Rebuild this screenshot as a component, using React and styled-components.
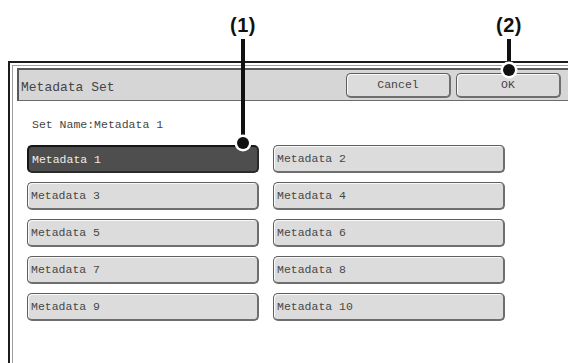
import React from "react";
import styled, { createGlobalStyle } from "styled-components";

const GlobalStyle = createGlobalStyle`
	html, body {
		margin: 0;
		padding: 0;
		background: #fff;
		overflow: hidden;
	}
`;

const keys = [
	"Metadata 1",
	"Metadata 2",
	"Metadata 3",
	"Metadata 4",
	"Metadata 5",
	"Metadata 6",
	"Metadata 7",
	"Metadata 8",
	"Metadata 9",
	"Metadata 10",
];

// callout: label on top, a stem down to the thing it points at, a dot at the end
function Callout({ label, x, bottom }) {
	return (
		<StyledCallout style={{ left: x }}>
			<span className="label">{label}</span>
			<span className="stem" style={{ height: bottom - 39 }} />
			<span className="dot" style={{ top: bottom - 6 }} />
		</StyledCallout>
	);
}

function App() {
	return (
		<Page>
			<GlobalStyle />
			<Frame>
				<Inner>
					<TitleBar>
						<Title>Metadata Set</Title>
						<BarButton>Cancel</BarButton>
						<BarButton>OK</BarButton>
					</TitleBar>
					<SetName>Set Name:Metadata 1</SetName>
					<KeyGrid>
						{keys.map((k, i) => (
							<Key key={k} $active={i === 0}>
								{k}
							</Key>
						))}
					</KeyGrid>
				</Inner>
			</Frame>
			<Callout label="(1)" x={243} bottom={143} />
			<Callout label="(2)" x={509} bottom={70} />
		</Page>
	);
}

const Page = styled.div`
	position: relative;
	width: 568px;
	height: 363px;
	padding-top: 61px;
	box-sizing: border-box;
	overflow: hidden;
`;

const Frame = styled.div`
	box-sizing: border-box;
	margin-left: 8px;
	width: 600px;
	height: 320px;
	border-top: 2px solid #1c1c1c;
	border-left: 2px solid #1c1c1c;
	padding: 2px 0 0 2px;
`;

const Inner = styled.div`
	box-sizing: border-box;
	height: 100%;
	border-top: 1px solid #a0a0a0;
	border-left: 1px solid #a0a0a0;
	padding: 2px 0 0 4px;
`;

const TitleBar = styled.div`
	box-sizing: border-box;
	display: flex;
	align-items: center;
	gap: 5px;
	width: 560px;
	height: 33px;
	padding: 0 16px 0 2px;
	background: #d6d6d6;
	border-top: 2px solid #5a5a5a;
	border-left: 2px solid #5a5a5a;
	border-bottom: 1px solid #6a6a6a;
`;

const Title = styled.div`
	flex: 1;
	padding-top: 5px;
	font-family: "Liberation Mono", monospace;
	font-size: 13px;
	color: #444;
`;

const BarButton = styled.button`
	box-sizing: border-box;
	width: 105px;
	height: 25px;
	padding: 0;
	font-family: "Liberation Mono", monospace;
	font-size: 11.5px;
	color: #444;
	background: #dcdcdc;
	border: 1px solid #5e5e5e;
	border-right-width: 2px;
	border-bottom-width: 2px;
	border-right-color: #6e6e6e;
	border-bottom-color: #6e6e6e;
	border-radius: 5px;
	box-shadow: inset 1px 1px 0 #fafafa;
`;

const SetName = styled.div`
	margin: 17px 0 0 15px;
	height: 14px;
	line-height: 14px;
	font-family: "Liberation Mono", monospace;
	font-size: 11.5px;
	color: #444;
`;

const KeyGrid = styled.div`
	display: grid;
	grid-template-columns: 232px 232px;
	grid-auto-rows: 28px;
	column-gap: 14px;
	row-gap: 9px;
	margin: 13px 0 0 10px;
`;

const Key = styled.button`
	box-sizing: border-box;
	height: 28px;
	padding: 0 0 0 3px;
	text-align: left;
	font-family: "Liberation Mono", monospace;
	font-size: 11.5px;
	color: ${(p) => (p.$active ? "#ededed" : "#474747")};
	background: ${(p) => (p.$active ? "#4e4e4e" : "#dcdcdc")};
	border-style: solid;
	border-color: ${(p) => (p.$active ? "#161616" : "#5e5e5e")};
	border-width: ${(p) => (p.$active ? "2px 1px 1px 2px" : "1px")};
	border-right: 2px solid ${(p) => (p.$active ? "#2a2a2a" : "#6e6e6e")};
	border-bottom: 2px solid ${(p) => (p.$active ? "#2a2a2a" : "#6e6e6e")};
	border-radius: 5px;
	box-shadow: ${(p) => (p.$active ? "none" : "inset 1px 1px 0 #fafafa")};
`;

const StyledCallout = styled.div`
	position: absolute;
	top: 0;
	width: 0;
	.label {
		position: absolute;
		top: 14px;
		left: 0;
		transform: translateX(-50%);
		font-family: "Liberation Sans", Arial, sans-serif;
		font-weight: 700;
		font-size: 20px;
		line-height: 22px;
		letter-spacing: 0.5px;
		color: #111;
		white-space: nowrap;
	}
	.stem {
		position: absolute;
		top: 39px;
		left: -2px;
		width: 4px;
		background: #111;
	}
	.dot {
		position: absolute;
		left: -6px;
		width: 12px;
		height: 12px;
		border-radius: 50%;
		background: #111;
		box-shadow: 0 0 0 2.5px #fff;
	}
`;

export default App;
